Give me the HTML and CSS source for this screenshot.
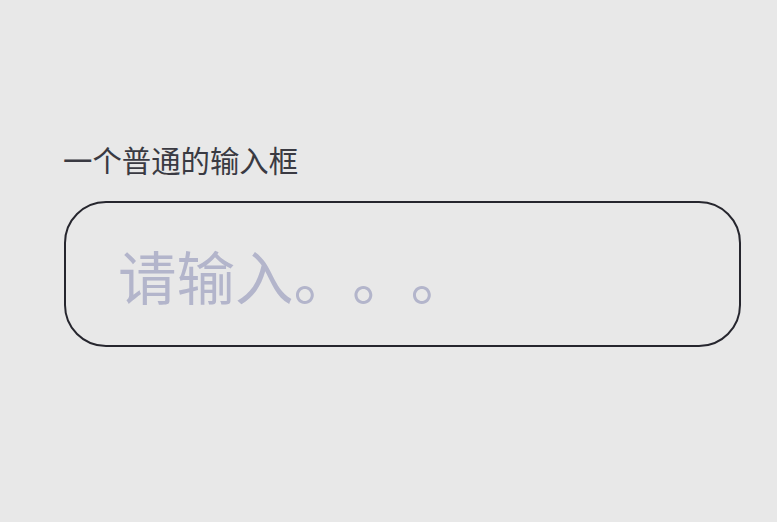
FILE: index.html
```html
<!DOCTYPE html>
<html lang="zh">
<head>
<meta charset="utf-8">
<link rel="stylesheet" href="styles.css">
</head>
<body>
<div class="wrap">
  <div class="label">一个普通的输入框</div>
  <input class="field" type="text" placeholder="请输入。。。">
</div>
</body>
</html>
```
FILE: styles.css
```css
html, body {
  margin: 0;
  padding: 0;
  background: #e8e8e8;
}
.wrap {
  padding: 139px 0 0 64px;
  display: flex;
  flex-direction: column;
  align-items: flex-start;
  font-family: "Noto Sans CJK SC", "Noto Sans", sans-serif;
  text-spacing-trim: space-all;
}
.label {
  font-size: 29.4px;
  line-height: 40px;
  color: #3a3a42;
  margin-bottom: 22px;
  margin-left: -1px;
}
.field {
  box-sizing: border-box;
  width: 677px;
  height: 146px;
  border: 2px solid #26262e;
  border-radius: 42px;
  background: transparent;
  padding: 0 0 0 52px;
  font-family: "Noto Sans CJK SC", "Noto Sans", sans-serif;
  font-size: 58.5px;
  color: #333;
  outline: none;
  text-spacing-trim: space-all;
}
.field::placeholder {
  color: #b3b5cb;
  text-spacing-trim: space-all;
}
```
